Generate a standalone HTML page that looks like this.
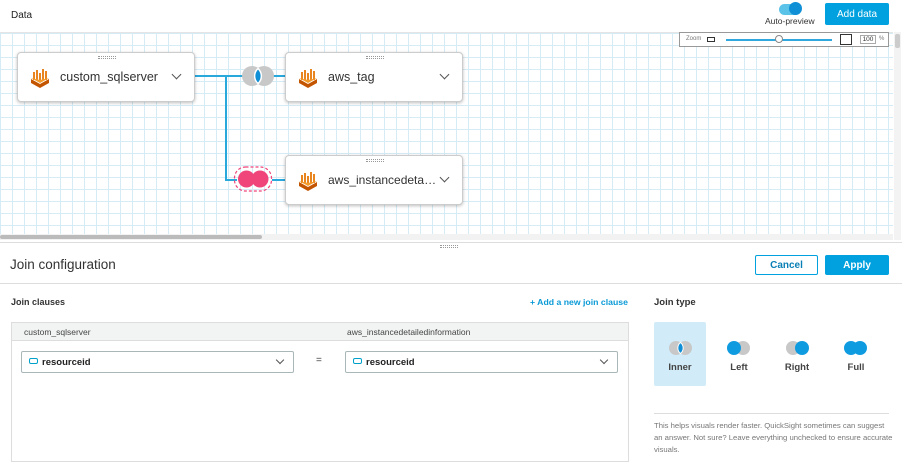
<!DOCTYPE html><html><head><style>
*{margin:0;padding:0;box-sizing:border-box}
body{width:902px;height:458px;overflow:hidden;background:#fff;font-family:"Liberation Sans",sans-serif;color:#222;position:relative}
.a{position:absolute}
.grid{left:0;top:32px;width:893px;height:202px;background-color:#fff;background-image:linear-gradient(#d5ebf6 1px,transparent 1px),linear-gradient(90deg,#d5ebf6 1px,transparent 1px);background-size:12px 12px;border-top:1px solid #e5e5e5}
.node{background:#fff;border:1px solid #ccc;border-radius:4px;box-shadow:0 1px 3px rgba(0,0,0,.25);height:50px;width:178px}
.node .t{position:absolute;left:42px;top:17px;font-size:12.5px;color:#333;width:110px;white-space:nowrap;overflow:hidden;text-overflow:ellipsis}
.node .dots{position:absolute;left:80px;top:3px;width:18px;height:3px;border-top:1px dotted #999;border-bottom:1px dotted #999}
.chev{position:absolute;right:14px;top:18px;width:7px;height:7px;border-right:1px solid #555;border-bottom:1px solid #555;transform:rotate(45deg)}
.btn{font-size:10px;border-radius:2px;display:flex;align-items:center;justify-content:center}
.sel{border:1px solid #aab7b8;height:22px;background:#fff;border-radius:2px}
.sel span{position:absolute;left:20px;top:5px;font-size:9.5px;font-weight:bold}
.sel i{position:absolute;left:7px;top:6px;width:9px;height:6px;border:1.5px solid #00a1c9;border-radius:2px}
.sel .chev{top:5px;right:10px;width:6px;height:6px}
.jt{font-size:9.5px;font-weight:bold;color:#444;text-align:center;width:52px}
</style></head><body>
<div class="a" style="left:11px;top:10px;font-size:10px">Data</div>
<div class="a" style="left:779px;top:4px;width:22px;height:11px;border-radius:6px;background:#5cc3e8"></div>
<div class="a" style="left:789px;top:2px;width:13px;height:13px;border-radius:50%;background:#0f8fd6"></div>
<div class="a" style="left:765px;top:16px;font-size:8.5px;color:#333">Auto-preview</div>
<div class="a btn" style="left:825px;top:3px;width:64px;height:22px;background:#00a1de;color:#fff">Add data</div>
<div class="a grid"></div>
<div class="a" style="left:0;top:234px;width:893px;height:6px;background:#f2f2f2"></div>
<div class="a" style="left:0;top:235px;width:262px;height:4px;background:#bbb;border-radius:2px"></div>
<div class="a" style="left:894px;top:32px;width:7px;height:208px;background:#f3f3f3"></div>
<div class="a" style="left:895px;top:34px;width:5px;height:14px;background:#ccc;border-radius:2px"></div>
<div class="a" style="left:679px;top:32px;width:210px;height:15px;background:#fff;border:1px solid #999;font-size:6px;color:#777">
<span class="a" style="left:6px;top:3px">Zoom</span>
<span class="a" style="left:27px;top:4px;width:8px;height:5px;border:1px solid #333"></span>
<span class="a" style="left:46px;top:6px;width:106px;height:2px;background:#2ea8dd"></span>
<span class="a" style="left:95px;top:2px;width:8px;height:8px;border-radius:50%;border:1px solid #888;background:#fff"></span>
<span class="a" style="left:160px;top:1px;width:12px;height:11px;border:1px solid #333"></span>
<span class="a" style="left:180px;top:2px;width:16px;height:9px;border:1px solid #aaa;font-size:6.5px;color:#333;text-align:center;line-height:8px">100</span>
<span class="a" style="left:199px;top:3px">%</span></div>
<div class="a" style="left:195px;top:75px;width:48px;height:2px;background:#29a8dc"></div>
<div class="a" style="left:273px;top:75px;width:12px;height:2px;background:#29a8dc"></div>
<div class="a" style="left:225px;top:76px;width:2px;height:104px;background:#29a8dc"></div>
<div class="a" style="left:225px;top:179px;width:12px;height:2px;background:#29a8dc"></div>
<div class="a" style="left:272px;top:179px;width:13px;height:2px;background:#29a8dc"></div>
<svg class="a" style="left:240px;top:64px" width="36" height="24"><circle cx="12" cy="12" r="10" fill="#c8c8c8"/><circle cx="24" cy="12" r="10" fill="#c8c8c8"/><path d="M18 4.5A10 10 0 0 1 18 19.5A10 10 0 0 1 18 4.5Z" fill="#0f8fd6" stroke="#fff" stroke-width="1.5"/></svg>
<svg class="a" style="left:233px;top:165px" width="40" height="28"><rect x="1.5" y="2" width="37" height="24" rx="11" fill="none" stroke="#f0457a" stroke-width="1.2" stroke-dasharray="3 2"/><circle cx="13.5" cy="14" r="8.5" fill="#f0457a"/><circle cx="27" cy="14" r="8.5" fill="#f0457a"/></svg>
<svg width="0" height="0" style="position:absolute"><defs><g id="ic"><path d="M1 12 L10 17 L19 12 L19 16 L10 21 L1 16Z" fill="#c45500"/><path d="M3 5h2v8H3zM6 3h2v10H6zM9 6h2v8H9zM12 2h2v11h-2zM15 4h2v9h-2z" fill="#e8851f"/><path d="M1 11L10 16L19 11L10 13Z" fill="#f39c2c"/></g></defs></svg>
<div class="a node" style="left:17px;top:52px"><div class="dots"></div><svg class="a" style="left:12px;top:14px" width="20" height="22"><use href="#ic"/></svg><div class="t">custom_sqlserver</div><div class="chev"></div></div>
<div class="a node" style="left:285px;top:52px"><div class="dots"></div><svg class="a" style="left:12px;top:14px" width="20" height="22"><use href="#ic"/></svg><div class="t">aws_tag</div><div class="chev"></div></div>
<div class="a node" style="left:285px;top:155px"><div class="dots"></div><svg class="a" style="left:12px;top:14px" width="20" height="22"><use href="#ic"/></svg><div class="t" style="font-size:12px">aws_instancedetaile…</div><div class="chev"></div></div>
<div class="a" style="left:0;top:242px;width:902px;height:1px;background:#ddd"></div>
<div class="a" style="left:440px;top:245px;width:18px;height:3px;border-top:1px dotted #999;border-bottom:1px dotted #999"></div>
<div class="a" style="left:10px;top:257px;font-size:13.5px;color:#333">Join configuration</div>
<div class="a btn" style="left:755px;top:255px;width:63px;height:20px;border:1px solid #00a1de;color:#0a7fb5;font-weight:bold">Cancel</div>
<div class="a btn" style="left:825px;top:255px;width:64px;height:20px;background:#00a1de;color:#fff;font-weight:bold">Apply</div>
<div class="a" style="left:0;top:283px;width:902px;height:1px;background:#ddd"></div>
<div class="a" style="left:11px;top:297px;font-size:9px;font-weight:bold;color:#333">Join clauses</div>
<div class="a" style="left:530px;top:297px;font-size:8.7px;font-weight:bold;color:#0a9ad6">+ Add a new join clause</div>
<div class="a" style="left:11px;top:322px;width:618px;height:140px;border:1px solid #ddd"></div>
<div class="a" style="left:12px;top:323px;width:616px;height:18px;background:#f2f3f3;border-bottom:1px solid #ddd"></div>
<div class="a" style="left:24px;top:327px;font-size:8.5px;color:#444">custom_sqlserver</div>
<div class="a" style="left:347px;top:327px;font-size:8.5px;color:#444">aws_instancedetailedinformation</div>
<div class="a sel" style="left:21px;top:351px;width:273px"><i></i><span>resourceid</span><div class="chev"></div></div>
<div class="a" style="left:316px;top:355px;font-size:10px;color:#444">=</div>
<div class="a sel" style="left:345px;top:351px;width:273px"><i></i><span>resourceid</span><div class="chev"></div></div>
<div class="a" style="left:654px;top:297px;font-size:9.5px;font-weight:bold;color:#333">Join type</div>
<div class="a" style="left:654px;top:322px;width:52px;height:64px;background:#d1ecf8;border-radius:2px"></div>
<svg class="a" style="left:668px;top:340px" width="26" height="16"><circle cx="8" cy="8" r="7" fill="#c8c8c8"/><circle cx="17" cy="8" r="7" fill="#c8c8c8"/><path d="M12.5 2.5A7 7 0 0 1 12.5 13.5A7 7 0 0 1 12.5 2.5Z" fill="#0f8fd6" stroke="#fff"/></svg>
<svg class="a" style="left:726px;top:340px" width="26" height="16"><circle cx="17" cy="8" r="7" fill="#c8c8c8"/><circle cx="8" cy="8" r="7" fill="#0f9be0"/></svg>
<svg class="a" style="left:785px;top:340px" width="26" height="16"><circle cx="8" cy="8" r="7" fill="#c8c8c8"/><circle cx="17" cy="8" r="7" fill="#0f9be0"/></svg>
<svg class="a" style="left:843px;top:340px" width="26" height="16"><circle cx="8" cy="8" r="7" fill="#0f9be0"/><circle cx="17" cy="8" r="7" fill="#0f9be0"/></svg>
<div class="a jt" style="left:654px;top:362px">Inner</div>
<div class="a jt" style="left:713px;top:362px">Left</div>
<div class="a jt" style="left:771px;top:362px">Right</div>
<div class="a jt" style="left:830px;top:362px">Full</div>
<div class="a" style="left:654px;top:413px;width:235px;height:1px;background:#ddd"></div>
<div class="a" style="left:654px;top:420px;width:240px;font-size:7.7px;line-height:12px;color:#777">This helps visuals render faster. QuickSight sometimes can suggest an answer. Not sure? Leave everything unchecked to ensure accurate visuals.</div>
</body></html>
